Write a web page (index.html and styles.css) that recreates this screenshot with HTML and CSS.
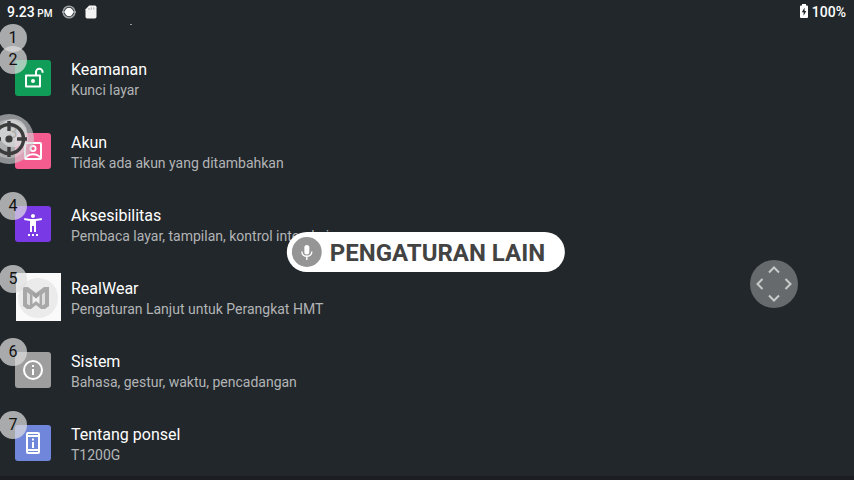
FILE: index.html
```html
<!DOCTYPE html>
<html lang="id">
<head>
<meta charset="utf-8">
<meta name="viewport" content="width=device-width, initial-scale=1">
<title>Setelan</title>
<link rel="stylesheet" href="styles.css">
</head>
<body>
<header class="status">
  <div class="status-group">
    <span class="clock">9.23 <small>PM</small></span>
    <svg class="status-icon" viewBox="0 0 16 16" aria-hidden="true"><circle cx="8" cy="8" r="5.800" fill="none" stroke="#9da0a2" stroke-width="1.600"/><path d="M1 8h3M12 8h3" stroke="#9da0a2" stroke-width="2"/><circle cx="8" cy="8" r="4.200" fill="#fff"/></svg>
    <svg class="status-icon" viewBox="0 0 16 16" aria-hidden="true"><path d="M6.200 1.500h5.600q1.700 0 1.700 1.700v9.600q0 1.700-1.700 1.700H4.200q-1.700 0-1.700-1.700V5.200z" fill="#f4f4f4"/><path d="M6 4v2M8.300 3.400v2.200M10.800 3.400v2.200" stroke="#a9abac" stroke-width="1"/></svg>
  </div>
  <div class="status-group battery">
    <svg class="battery-icon" viewBox="0 0 10 14" aria-hidden="true"><path d="M3 0h4v1.400h1q1 0 1 1V13q0 1-1 1H2q-1 0-1-1V2.400q0-1 1-1h1z" fill="#fff"/><path d="M5.600 3.500L2.800 8.300h1.800v3.500L7.300 7H5.600z" fill="#22272b"/></svg>
    <span>100%</span>
  </div>
</header>

<main class="settings">
  <div class="scrolled"><span class="badge badge-first">1</span><i class="remnant"></i></div>
  <ul class="list">
    <li><a class="row" href="#keamanan">
      <span class="badge">2</span>
      <span class="tile green"><svg viewBox="0 0 24 24"><path d="M5 9.500h14v11H5zM15 9.500V6a3.300 3.300 0 0 1 6.600 0v.8" fill="none" stroke="#fff" stroke-width="2" stroke-linejoin="round"/><circle cx="12" cy="15" r="2" fill="#fff"/></svg></span>
      <span class="text"><span class="title">Keamanan</span><span class="summary">Kunci layar</span></span>
    </a></li>
    <li><a class="row" href="#akun">
      <span class="badge">3</span>
      <span class="tile pink"><svg viewBox="0 0 24 24"><rect x="4" y="4" width="16" height="16" rx="1" fill="none" stroke="#fff" stroke-width="2"/><circle cx="12" cy="9.500" r="2.600" fill="none" stroke="#fff" stroke-width="1.800"/><path d="M5 18.500c3-4.300 11-4.300 14 0" fill="none" stroke="#fff" stroke-width="2"/></svg></span>
      <span class="text"><span class="title">Akun</span><span class="summary">Tidak ada akun yang ditambahkan</span></span>
    </a></li>
    <li><a class="row" href="#aksesibilitas">
      <span class="badge">4</span>
      <span class="tile purple"><svg viewBox="0 0 24 24"><path d="M20.500 6c-2.600.700-5.600 1-8.500 1s-5.900-.300-8.500-1L3 8c1.900.500 4 .800 6 1v11h2v-6h2v6h2V9c2-.200 4.100-.500 6-1zM12 6c1.100 0 2-.900 2-2s-.900-2-2-2-2 .900-2 2 .900 2 2 2zM7 22h2v2H7zm4 0h2v2h-2zm4 0h2v2h-2z" fill="#fff"/></svg></span>
      <span class="text"><span class="title">Aksesibilitas</span><span class="summary">Pembaca layar, tampilan, kontrol interaksi</span></span>
    </a></li>
    <li><a class="row" href="#realwear">
      <span class="badge">5</span>
      <span class="tile brand"><svg class="brand-mark" viewBox="0 0 45 48"><rect width="45" height="48" fill="#fafafa"/><circle cx="22" cy="25" r="20" fill="#ebebeb"/><g class="brand-glyph"><path d="M7 14h5l8 6 8-6h5v19l-4 3h-4l-5-4-5 4h-4l-4-3z" fill="#a8a8a8"/><path d="M11 19l3 2.500v11l-3-1.500zM29 19l-3 2.500v11l3-1.500z" fill="#dedede"/><path d="M16.500 22l3.500 3 3.500-3v9L20 28l-3.500 3z" fill="#f0f0f0"/><path d="M17 19l3 2.500 3-2.500v4l-3 2.500-3-2.500z" fill="#a0a0a0"/></g></svg></span>
      <span class="text"><span class="title">RealWear</span><span class="summary">Pengaturan Lanjut untuk Perangkat HMT</span></span>
    </a></li>
    <li><a class="row" href="#sistem">
      <span class="badge">6</span>
      <span class="tile gray"><svg viewBox="0 0 24 24"><circle cx="12" cy="12" r="9" fill="none" stroke="#fff" stroke-width="2"/><path d="M11 7h2v2h-2zm0 4h2v6h-2z" fill="#fff"/></svg></span>
      <span class="text"><span class="title">Sistem</span><span class="summary">Bahasa, gestur, waktu, pencadangan</span></span>
    </a></li>
    <li><a class="row" href="#tentang">
      <span class="badge">7</span>
      <span class="tile blue"><svg viewBox="0 0 24 24"><rect x="6" y="2" width="12" height="20" rx="1" fill="none" stroke="#fff" stroke-width="2"/><path d="M6 5h12M6 19h12" stroke="#fff" stroke-width="2"/><path d="M11 7.500h2v2h-2zm0 3.500h2v6h-2z" fill="#fff"/></svg></span>
      <span class="text"><span class="title">Tentang ponsel</span><span class="summary">T1200G</span></span>
    </a></li>
  </ul>
</main>

<svg class="target" viewBox="0 0 50 50" aria-hidden="true"><circle cx="25" cy="25" r="25" fill="#cfd1d2" fill-opacity=".62"/><circle cx="25" cy="25" r="19.500" fill="#e9e9e9" fill-opacity=".35"/><circle cx="25" cy="25" r="14.500" fill="none" stroke="#3c3c3c" stroke-width="3.400"/><path d="M25 7v10M25 33v10M7 25h10M33 25h10" stroke="#3c3c3c" stroke-width="3.400"/><circle cx="25" cy="25" r="3.600" fill="#3c3c3c"/></svg>

<button class="voice" type="button">
  <svg class="mic" viewBox="0 0 30 30" aria-hidden="true"><circle cx="15" cy="15" r="15" fill="#959595"/><rect x="12.500" y="8" width="5" height="9.500" rx="2.500" fill="#fff"/><path d="M10 14.500c0 6.400 10 6.400 10 0M15 19.300V23" fill="none" stroke="#fff" stroke-width="1.400"/></svg>
  <span class="voice-label">PENGATURAN LAIN</span>
</button>

<button class="pad" type="button" aria-label="Gulir">
  <svg viewBox="0 0 48 48"><path d="M19 12.500l5-5 5 5M19 35.500l5 5 5-5M12.500 19l-5 5 5 5M35.500 19l5 5-5 5" fill="none" stroke="#c9cbcb" stroke-width="2"/></svg>
</button>
<footer class="bottom-edge"></footer>
</body>
</html>
```
FILE: styles.css
```css
* { box-sizing: border-box; }

body {
  margin: 0;
  height: 100vh;
  overflow: hidden;
  display: flex;
  flex-direction: column;
  position: relative;
  background: #22272b;
  color: #fff;
  font-family: Roboto, "Liberation Sans", sans-serif;
}

.status {
  flex: none;
  height: 24px;
  padding: 0 8px 0 7px;
  display: flex;
  justify-content: space-between;
  align-items: center;
  font-size: 14px;
  font-weight: 500;
}
.status-group { display: flex; align-items: center; gap: 6px; }
.clock { margin-right: 3px; }
.clock small { font-size: 10px; margin-left: -1px; }
.status-icon { width: 16px; height: 16px; }
.battery { gap: 3px; }
.battery-icon { width: 10px; height: 14px; margin-bottom: 3px; }

.settings { flex: 1; min-height: 0; }
.scrolled { position: relative; height: 18px; }
.remnant {
  position: absolute;
  left: 130px;
  top: 0;
  width: 2px;
  height: 1px;
  background: #989b9d;
}

.list { margin: 0; padding: 0; list-style: none; }
.row {
  position: relative;
  height: 73px;
  padding: 0 0 1px 15px;
  display: flex;
  align-items: center;
  color: inherit;
  text-decoration: none;
}

.badge {
  position: absolute;
  z-index: 1;
  left: -1px;
  top: 4px;
  width: 28px;
  height: 28px;
  border-radius: 50%;
  background: rgba(222, 222, 222, .72);
  color: #111;
  font-size: 16px;
  line-height: 28px;
  text-align: center;
}
.badge-first { top: 0; }

.tile {
  flex: none;
  width: 36px;
  height: 36px;
  margin-right: 20px;
  border-radius: 3px;
  display: flex;
  align-items: center;
  justify-content: center;
}
.tile svg { width: 24px; height: 24px; }
.green { background: #109d58; }
.pink { background: #f45b8e; }
.purple { background: #7939e4; }
.gray { background: #9e9e9e; }
.blue { background: #6f86db; }
.brand {
  width: 45px;
  height: 48px;
  margin: 0 10px 0 1px;
  border-radius: 0;
}
.tile .brand-mark { width: 45px; height: 48px; }
.brand-glyph { filter: blur(.5px); }

.text { display: flex; flex-direction: column; padding-top: 2px; }
.title { font-size: 16px; line-height: 22px; }
.summary { font-size: 14px; line-height: 18px; color: #b2b4b6; white-space: nowrap; }

.target {
  position: absolute;
  z-index: 2;
  left: -16px;
  top: 114px;
  width: 50px;
  height: 50px;
}

.voice {
  position: absolute;
  z-index: 2;
  left: calc(50% - 1px);
  top: 232px;
  transform: translateX(-50%);
  height: 40px;
  padding: 0 20px 0 5px;
  display: flex;
  align-items: center;
  gap: 8px;
  border: 0;
  border-radius: 20px;
  background: #fff;
  color: #434343;
  font: 700 24px/38px Roboto, "Liberation Sans", sans-serif;
  white-space: nowrap;
}
.voice-label { padding-top: 2px; }
.mic { width: 30px; height: 30px; }

.pad {
  position: absolute;
  z-index: 2;
  right: 56px;
  top: 260px;
  width: 48px;
  height: 48px;
  padding: 0;
  border: 0;
  border-radius: 50%;
  background: #666a6c;
}
.pad svg { display: block; width: 48px; height: 48px; }

.bottom-edge {
  position: relative;
  z-index: 1;
  flex: none;
  height: 4px;
  background: #1b1d22;
}
```
